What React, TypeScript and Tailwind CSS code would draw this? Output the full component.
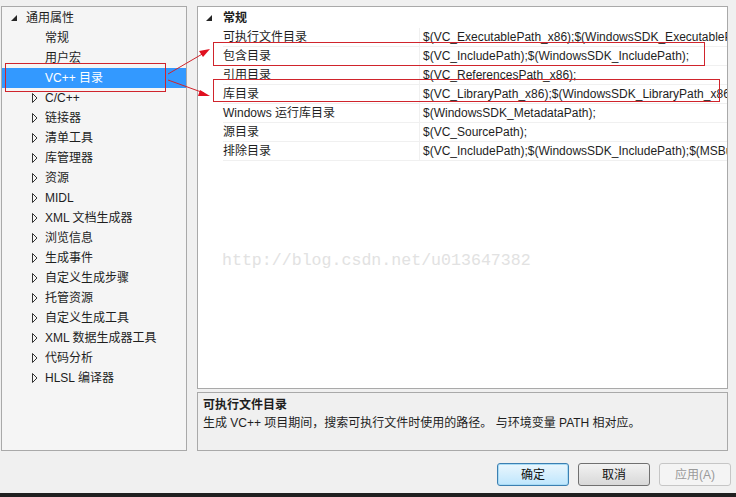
import React from "react";

const FONT = { fontFamily: '"Liberation Sans", "Noto Sans CJK SC", sans-serif' };

const treeItems: { label: string; level: number; expand?: "open" | "closed"; selected?: boolean }[] = [
  { label: "通用属性", level: 0, expand: "open" },
  { label: "常规", level: 1 },
  { label: "用户宏", level: 1 },
  { label: "VC++ 目录", level: 1, selected: true },
  { label: "C/C++", level: 1, expand: "closed" },
  { label: "链接器", level: 1, expand: "closed" },
  { label: "清单工具", level: 1, expand: "closed" },
  { label: "库管理器", level: 1, expand: "closed" },
  { label: "资源", level: 1, expand: "closed" },
  { label: "MIDL", level: 1, expand: "closed" },
  { label: "XML 文档生成器", level: 1, expand: "closed" },
  { label: "浏览信息", level: 1, expand: "closed" },
  { label: "生成事件", level: 1, expand: "closed" },
  { label: "自定义生成步骤", level: 1, expand: "closed" },
  { label: "托管资源", level: 1, expand: "closed" },
  { label: "自定义生成工具", level: 1, expand: "closed" },
  { label: "XML 数据生成器工具", level: 1, expand: "closed" },
  { label: "代码分析", level: 1, expand: "closed" },
  { label: "HLSL 编译器", level: 1, expand: "closed" },
];

const props: [string, string][] = [
  ["可执行文件目录", "$(VC_ExecutablePath_x86);$(WindowsSDK_ExecutablePath_x86);$(WindowsSDK_ExecutablePath);$(VS_ExecutablePath)"],
  ["包含目录", "$(VC_IncludePath);$(WindowsSDK_IncludePath);"],
  ["引用目录", "$(VC_ReferencesPath_x86);"],
  ["库目录", "$(VC_LibraryPath_x86);$(WindowsSDK_LibraryPath_x86);$(NETFXKitsDir)Lib"],
  ["Windows 运行库目录", "$(WindowsSDK_MetadataPath);"],
  ["源目录", "$(VC_SourcePath);"],
  ["排除目录", "$(VC_IncludePath);$(WindowsSDK_IncludePath);$(MSBuild_ExecutablePath);$(VC_LibraryPath_x86)"],
];

function OpenGlyph() {
  return (
    <svg width="7" height="7" viewBox="0 0 7 7">
      <polygon points="6,0 6,6 0,6" fill="#262626" />
    </svg>
  );
}

function ClosedGlyph() {
  return (
    <svg width="6" height="10" viewBox="0 0 6 10">
      <polygon points="0.5,0.5 5,5 0.5,9.5" fill="none" stroke="#333" strokeWidth="1" />
    </svg>
  );
}

function Button({ label, variant }: { label: string; variant: "default" | "normal" | "disabled" }) {
  const cls =
    variant === "default"
      ? "border-[#3c7fb1] bg-gradient-to-b from-[#eaf6fd] to-[#bee6fd] text-[#111] shadow-[inset_0_0_0_1px_#a8dbf5]"
      : variant === "normal"
      ? "border-[#707070] bg-gradient-to-b from-[#f2f2f2] to-[#d8d8d8] text-[#111]"
      : "border-[#c6c6c6] bg-[#f4f4f4] text-[#9a9a9a]";
  return (
    <div className={`w-[72px] h-[23px] rounded-[3px] border flex items-center justify-center text-[12px] ${cls}`}>
      {label}
    </div>
  );
}

export default function App() {
  return (
    <div className="relative w-[736px] h-[497px] bg-[#f0f0f0] overflow-hidden text-[12px] text-[#1e1e1e]" style={FONT}>
      <div className="flex pt-[6px] pl-[1px] w-[736px]">
        {/* Left tree */}
        <div className="w-[186px] shrink-0 h-[445px] border border-[#a9a9a9] bg-[#f5f5f5] pt-[1px] overflow-hidden">
          {treeItems.map((it, i) => (
            <div
              key={i}
              className={`h-[20px] flex items-center ${it.selected ? "bg-[#3399ff] text-white" : ""}`}
            >
              <div className={`${it.level === 0 ? "w-[24px] pl-[9px]" : "w-[43px] pl-[30px]"} shrink-0 flex items-center`}>
                {it.expand === "open" && <OpenGlyph />}
                {it.expand === "closed" && <ClosedGlyph />}
              </div>
              <span className="whitespace-nowrap">{it.label}</span>
            </div>
          ))}
        </div>

        {/* Splitter */}
        <div className="w-[10px] shrink-0" />

        {/* Right column */}
        <div className="flex flex-col w-[531px] shrink-0 min-w-0">
          <div className="h-[383px] w-[531px] border border-[#a9a9a9] bg-white overflow-hidden pt-[1px] relative">
            <div className="h-[20px] flex items-center">
              <div className="w-[25px] pl-[8px] shrink-0 flex items-center">
                <OpenGlyph />
              </div>
              <span className="font-bold">常规</span>
            </div>
            {props.map(([name, value], i) => (
              <div key={i} className="h-[19px] flex items-center w-full">
                <div className="w-[25px] h-full shrink-0" />
                <div className="w-[197px] shrink-0 h-full flex items-center border-b border-r border-[#f0f0f0] whitespace-nowrap">
                  {name}
                </div>
                <div className="flex-1 min-w-0 h-full flex items-center pl-[3px] border-b border-[#f0f0f0] whitespace-nowrap overflow-hidden">
                  {value}
                </div>
              </div>
            ))}
            <div
              className="absolute left-[24px] top-[242px] text-[16.6px] text-[#e2e2e2] whitespace-nowrap"
              style={{ fontFamily: '"Liberation Mono", "DejaVu Sans Mono", monospace' }}
            >
              http://blog.csdn.net/u013647382
            </div>
          </div>
          <div className="mt-[3px] h-[59px] w-[531px] border border-[#a9a9a9] bg-[#f0f0f0] px-[5px] pt-[3px] overflow-hidden">
            <div className="font-bold h-[18px] leading-[18px]">可执行文件目录</div>
            <div className="h-[18px] leading-[18px] whitespace-nowrap">
              生成 VC++ 项目期间，搜索可执行文件时使用的路径。 与环境变量 PATH 相对应。
            </div>
          </div>
        </div>
      </div>

      {/* Buttons */}
      <div className="flex justify-end gap-[9px] pr-[5px] mt-[12px]">
        <Button label="确定" variant="default" />
        <Button label="取消" variant="normal" />
        <Button label="应用(A)" variant="disabled" />
      </div>

      {/* Bottom dark edge */}
      <div className="absolute left-0 right-0 bottom-0 h-[4px] bg-[#202020]" />

      {/* Red annotations */}
      <svg className="absolute left-0 top-0" width="736" height="497" style={{ pointerEvents: "none" }}>
        <rect x="5.5" y="63.5" width="160" height="28" fill="none" stroke="#d0242c" strokeWidth="1" />
        <rect x="213.5" y="42.5" width="491" height="23" fill="none" stroke="#d0242c" strokeWidth="1" />
        <rect x="213.5" y="79.5" width="506" height="22" fill="none" stroke="#d0242c" strokeWidth="1" />
        <line x1="168" y1="74" x2="204" y2="53" stroke="#d0242c" strokeWidth="1" />
        <polygon points="210,49 199,51 203,57" fill="#e01020" />
        <line x1="168" y1="80" x2="204" y2="93" stroke="#d0242c" strokeWidth="1" />
        <polygon points="210,96 200,90 198,96" fill="#e01020" />
      </svg>
    </div>
  );
}
